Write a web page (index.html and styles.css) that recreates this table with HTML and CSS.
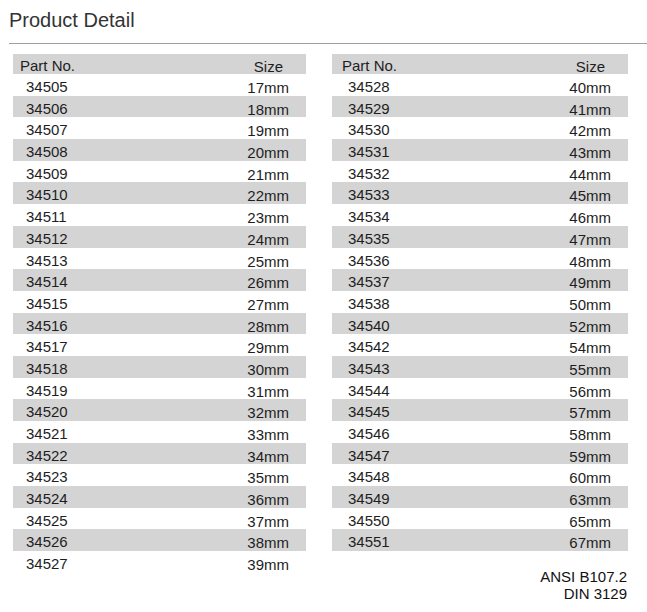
FILE: index.html
```html
<!DOCTYPE html>
<html>
<head>
<meta charset="utf-8">
<link rel="stylesheet" href="styles.css">
</head>
<body>
<div class="page">
  <h1 class="title">Product Detail</h1>
  <div class="tables">
    <div class="col col-left">
      <div class="tbl">
        <div class="row head"><span class="pn">Part No.</span><span class="sz">Size</span></div>
        <div class="row"><span class="pn">34505</span><span class="sz">17mm</span></div>
        <div class="row"><span class="pn">34506</span><span class="sz">18mm</span></div>
        <div class="row"><span class="pn">34507</span><span class="sz">19mm</span></div>
        <div class="row"><span class="pn">34508</span><span class="sz">20mm</span></div>
        <div class="row"><span class="pn">34509</span><span class="sz">21mm</span></div>
        <div class="row"><span class="pn">34510</span><span class="sz">22mm</span></div>
        <div class="row"><span class="pn">34511</span><span class="sz">23mm</span></div>
        <div class="row"><span class="pn">34512</span><span class="sz">24mm</span></div>
        <div class="row"><span class="pn">34513</span><span class="sz">25mm</span></div>
        <div class="row"><span class="pn">34514</span><span class="sz">26mm</span></div>
        <div class="row"><span class="pn">34515</span><span class="sz">27mm</span></div>
        <div class="row"><span class="pn">34516</span><span class="sz">28mm</span></div>
        <div class="row"><span class="pn">34517</span><span class="sz">29mm</span></div>
        <div class="row"><span class="pn">34518</span><span class="sz">30mm</span></div>
        <div class="row"><span class="pn">34519</span><span class="sz">31mm</span></div>
        <div class="row"><span class="pn">34520</span><span class="sz">32mm</span></div>
        <div class="row"><span class="pn">34521</span><span class="sz">33mm</span></div>
        <div class="row"><span class="pn">34522</span><span class="sz">34mm</span></div>
        <div class="row"><span class="pn">34523</span><span class="sz">35mm</span></div>
        <div class="row"><span class="pn">34524</span><span class="sz">36mm</span></div>
        <div class="row"><span class="pn">34525</span><span class="sz">37mm</span></div>
        <div class="row"><span class="pn">34526</span><span class="sz">38mm</span></div>
        <div class="row"><span class="pn">34527</span><span class="sz">39mm</span></div>
      </div>
    </div>
    <div class="col col-right">
      <div class="tbl">
        <div class="row head"><span class="pn">Part No.</span><span class="sz">Size</span></div>
        <div class="row"><span class="pn">34528</span><span class="sz">40mm</span></div>
        <div class="row"><span class="pn">34529</span><span class="sz">41mm</span></div>
        <div class="row"><span class="pn">34530</span><span class="sz">42mm</span></div>
        <div class="row"><span class="pn">34531</span><span class="sz">43mm</span></div>
        <div class="row"><span class="pn">34532</span><span class="sz">44mm</span></div>
        <div class="row"><span class="pn">34533</span><span class="sz">45mm</span></div>
        <div class="row"><span class="pn">34534</span><span class="sz">46mm</span></div>
        <div class="row"><span class="pn">34535</span><span class="sz">47mm</span></div>
        <div class="row"><span class="pn">34536</span><span class="sz">48mm</span></div>
        <div class="row"><span class="pn">34537</span><span class="sz">49mm</span></div>
        <div class="row"><span class="pn">34538</span><span class="sz">50mm</span></div>
        <div class="row"><span class="pn">34540</span><span class="sz">52mm</span></div>
        <div class="row"><span class="pn">34542</span><span class="sz">54mm</span></div>
        <div class="row"><span class="pn">34543</span><span class="sz">55mm</span></div>
        <div class="row"><span class="pn">34544</span><span class="sz">56mm</span></div>
        <div class="row"><span class="pn">34545</span><span class="sz">57mm</span></div>
        <div class="row"><span class="pn">34546</span><span class="sz">58mm</span></div>
        <div class="row"><span class="pn">34547</span><span class="sz">59mm</span></div>
        <div class="row"><span class="pn">34548</span><span class="sz">60mm</span></div>
        <div class="row"><span class="pn">34549</span><span class="sz">63mm</span></div>
        <div class="row"><span class="pn">34550</span><span class="sz">65mm</span></div>
        <div class="row"><span class="pn">34551</span><span class="sz">67mm</span></div>
      </div>
      <div class="standards">
        <div>ANSI B107.2</div>
        <div>DIN 3129</div>
      </div>
    </div>
  </div>
</div>
</body>
</html>
```

FILE: styles.css
```css
html, body {
  margin: 0;
  padding: 0;
  background: #ffffff;
}

body {
  font-family: "Liberation Sans", Arial, sans-serif;
  color: #1e1e1e;
}

.page {
  padding-top: 9px;
}

.title {
  margin: 0 0 0 9px;
  padding: 0 0 11px 0;
  font-size: 20px;
  line-height: 23px;
  font-weight: normal;
  color: #333333;
  border-bottom: 1px solid #a0a0a0;
}

.tables {
  display: flex;
  align-items: flex-start;
  gap: 26px;
  padding-left: 13px;
  margin-top: 10px;
}

.col-left {
  width: 293px;
}

.col-right {
  width: 296px;
}

.tbl {
  display: flex;
  flex-direction: column;
}

.row {
  display: flex;
  justify-content: space-between;
  height: 21.7px;
  line-height: 21.7px;
  font-size: 15px;
  white-space: nowrap;
}

.row:nth-child(odd) {
  background: #d4d4d4;
}

.row.head {
  height: 20px;
  line-height: 20px;
}

.pn {
  padding-top: 2px;
}

.sz {
  padding-top: 3px;
  padding-right: 17px;
}

.head .sz {
  padding-right: 23px;
}

.col-left .pn {
  padding-left: 13px;
}

.col-left .head .pn {
  padding-left: 7px;
}

.col-right .pn {
  padding-left: 16px;
}

.col-right .head .pn {
  padding-left: 10px;
}

.standards {
  margin-top: 17px;
  padding-right: 1px;
  text-align: right;
  font-size: 15px;
  line-height: 17px;
  color: #111111;
}
```
